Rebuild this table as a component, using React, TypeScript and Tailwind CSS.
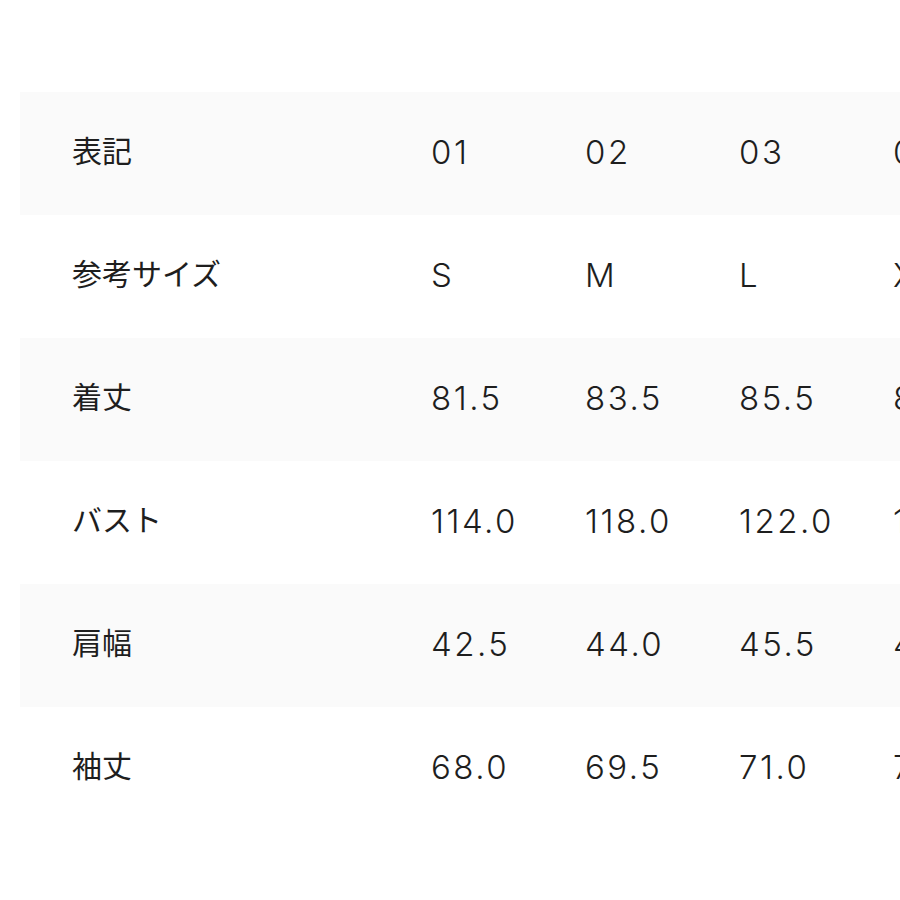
import React from "react";

const rows: { label: string; values: string[] }[] = [
  { label: "表記", values: ["01", "02", "03", "04"] },
  { label: "参考サイズ", values: ["S", "M", "L", "XL"] },
  { label: "着丈", values: ["81.5", "83.5", "85.5", "87.5"] },
  { label: "バスト", values: ["114.0", "118.0", "122.0", "126.0"] },
  { label: "肩幅", values: ["42.5", "44.0", "45.5", "47.0"] },
  { label: "袖丈", values: ["68.0", "69.5", "71.0", "72.5"] },
];

export default function App() {
  return (
    <div className="w-[900px] h-[900px] overflow-hidden bg-white pt-[92px] pl-[20px]">
      <div className="w-[1100px] text-[#1e1e1e] text-[30px] leading-none" style={{ fontFamily: 'Inter, "Noto Sans CJK JP", sans-serif' }}>
        {rows.map((r, i) => (
          <div key={i} className={`flex items-center h-[123px] pb-[5px] ${i % 2 === 0 ? "bg-[#fafafa]" : "bg-white"}`}>
            <div className="w-[411px] pl-[52px] shrink-0">{r.label}</div>
            {r.values.map((v, j) => (
              <div key={j} className="w-[154px] shrink-0 text-[33px] font-light tracking-[2.5px] pt-[2px]">{v}</div>
            ))}
          </div>
        ))}
      </div>
    </div>
  );
}
